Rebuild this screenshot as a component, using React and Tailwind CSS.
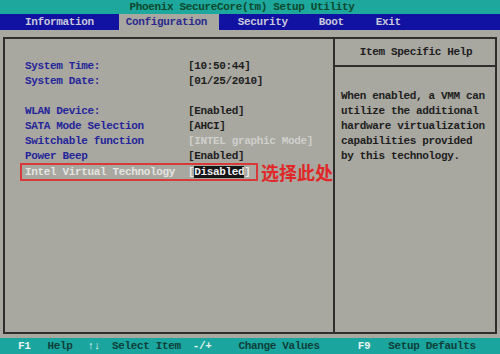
const mono = "font-['Liberation_Mono','DejaVu_Sans_Mono',monospace] text-[11px] tracking-[-0.35px] font-bold";

const rows = [
    { label: 'System Time:', value: '[10:50:44]' },
    { label: 'System Date:', value: '[01/25/2010]' },
    null,
    { label: 'WLAN Device:', value: '[Enabled]' },
    { label: 'SATA Mode Selection', value: '[AHCI]' },
    { label: 'Switchable function', value: '[INTEL graphic Mode]', dim: true },
    { label: 'Power Beep', value: '[Enabled]' },
];

const App = () => {
    return (
        <div className={`w-[500px] h-[354px] flex flex-col bg-[#a8a7a0] overflow-hidden ${mono}`}>

            {/* Title bar */}
            <div className="h-[14px] bg-[#1ea79c] flex items-center justify-center pr-[16px] text-[#0c4a2c] leading-none">
                Phoenix SecureCore(tm) Setup Utility
            </div>

            {/* Menu bar */}
            <div className="h-[16px] bg-[#1212a2] flex items-stretch text-[#c8c8dc] leading-none">
                <span className="ml-[25px] flex items-center">Information</span>
                <span className="ml-[25px] w-[100px] pl-[7px] bg-[#a8a7a0] text-[#2a2a8e] flex items-center">Configuration</span>
                <span className="ml-[19px] flex items-center">Security</span>
                <span className="ml-[31px] flex items-center">Boot</span>
                <span className="ml-[32px] flex items-center">Exit</span>
            </div>

            {/* Body */}
            <div className="flex-1 px-[3px] pt-[7px] pb-[4px] flex">
                <div className="flex-1 flex border-2 border-[#2e2e2c]">

                    {/* Left: settings */}
                    <div className="w-[330px] border-r-2 border-[#2e2e2c] pt-[20px] leading-[15px]">
                        {rows.map((row, i) => row ? (
                            <div key={i} className="flex h-[15px] pl-[20px]">
                                <span className="w-[163px] text-[#25259a]">{row.label}</span>
                                <span className={row.dim ? 'text-[#cfcfcc]' : 'text-[#1e1e1e]'}>{row.value}</span>
                            </div>
                        ) : (
                            <div key={i} className="h-[15px]" />
                        ))}

                        {/* Selected row */}
                        <div className="flex items-center mt-[-1px]">
                            <div className="ml-[15px] w-[238px] h-[18px] border-2 border-[#d8393a] flex items-center pl-[3px]">
                                <span className="w-[163px] text-[#e4e4e0]">Intel Virtual Technology</span>
                                <span className="text-[#e8e8e4]">[<span className="bg-[#141414] text-[#f0f0f0]">Disabled</span>]</span>
                            </div>
                            <span className="ml-[3px] font-['Noto_Sans_CJK_SC',sans-serif] text-[18px] tracking-normal font-bold text-[#e02828] leading-none">选择此处</span>
                        </div>
                    </div>

                    {/* Right: help */}
                    <div className="flex-1 flex flex-col">
                        <div className="h-[28px] border-b-2 border-[#2e2e2c] flex items-center justify-center text-[#202020] pl-[2px]">
                            Item Specific Help
                        </div>
                        <div className="pt-[22px] pl-[6px] leading-[15px] text-[#1e1e1e] whitespace-pre">
                            {'When enabled, a VMM can\nutilize the additional\nhardware virtualization\ncapabilities provided\nby this technology.'}
                        </div>
                    </div>
                </div>
            </div>

            {/* Key bar */}
            <div className="h-[16px] bg-[#1aa59e] flex items-center leading-none text-[#0f3f3a]">
                <span className="ml-[18px] text-[#e6f2ee]">F1</span>
                <span className="ml-[17px]">Help</span>
                <span className="ml-[15px] text-[#e6f2ee]">↑↓</span>
                <span className="ml-[12px]">Select Item</span>
                <span className="ml-[12px] text-[#e6f2ee]">-/+</span>
                <span className="ml-[27px]">Change Values</span>
                <span className="ml-[38px] text-[#e6f2ee]">F9</span>
                <span className="ml-[18px]">Setup Defaults</span>
            </div>
        </div>
    );
};

export default App;
